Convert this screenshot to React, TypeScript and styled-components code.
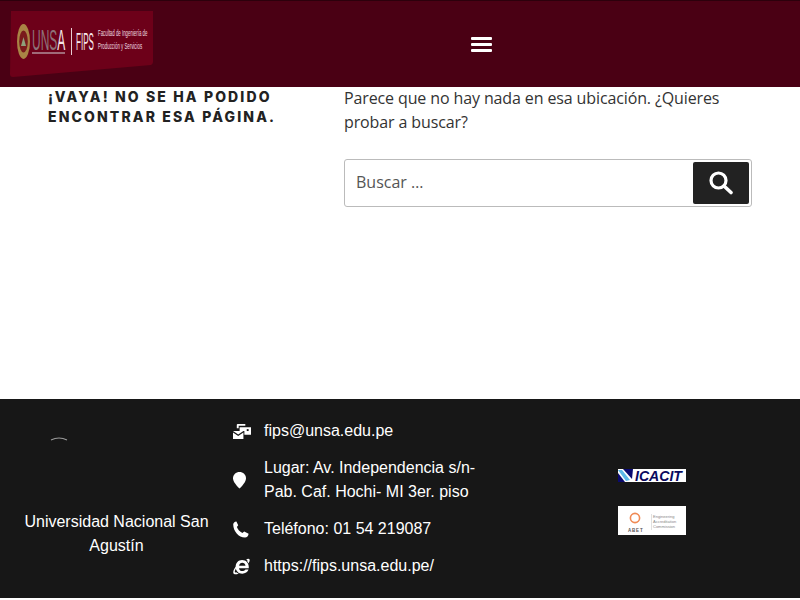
import React from "react";
import styled, { createGlobalStyle } from "styled-components";

const Global = createGlobalStyle`
  html, body { margin: 0; padding: 0; background: #fff; overflow: hidden; }
  * { box-sizing: border-box; }
`;
const Page = styled.div`
  width: 800px; height: 600px; display: flex; flex-direction: column; background: #fff;
`;
const Header = styled.header`
  height: 87px; flex: none; background: #4a0014; border-top: 1px solid #2c000c;
  display: flex; align-items: center; gap: 315px; padding-left: 10px;
`;
const LogoBox = styled.div`
  display: flex; align-self: flex-start; margin-top: -1px;
`;
const Burger = styled.div`
  width: 21px; display: flex; flex-direction: column; gap: 3px;
`;
const BurgerBar = styled.span`
  display: block; height: 3px; border-radius: 1px; background: #fff;
`;
const Main = styled.main`
  flex: none; height: 312px; display: grid; grid-template-columns: 296px 408px; padding: 0 48px;
`;
const Title = styled.h1`
  margin: 0; font: 800 14px/20px "Inter", "Liberation Sans", sans-serif;
  letter-spacing: 2.13px; color: #222; text-transform: uppercase;
`;
const Content = styled.div`
  display: flex; flex-direction: column; margin-top: -1px;
`;
const Lead = styled.p`
  margin: 0 0 25px; font: 400 16px/24px "Open Sans", "Liberation Sans", sans-serif; letter-spacing: -0.12px; color: #333;
`;
const SearchForm = styled.form`
  display: flex; align-items: center; justify-content: space-between; height: 48px; width: 408px;
  border: 1px solid #bbb; border-radius: 3px; padding: 0 2px 0 11px;
`;
const SearchPlaceholder = styled.span`
  font: 400 16px/24px "Open Sans", "Liberation Sans", sans-serif; color: #555; margin-top: -2px;
`;
const SearchButton = styled.div`
  width: 56px; height: 42px; background: #222; border-radius: 2px; display: flex; align-items: center; justify-content: center;
`;
const Footer = styled.footer`
  flex: none; height: 199px; background: #171717; display: grid; grid-template-columns: 233px 385px 182px;
  font: 400 16px/24px "Liberation Sans", Arial, sans-serif; color: #fff;
`;
const Uni = styled.div`
  display: flex; flex-direction: column; align-items: center; padding-top: 37px;
`;
const Arc = styled.div`
  display: flex; height: 74px; align-self: flex-start; margin-left: 50px;
`;
const UniName = styled.div`
  text-align: center; width: 200px;
`;
const Contacts = styled.ul`
  list-style: none; margin: 0; padding: 20px 0 0; display: flex; flex-direction: column; gap: 13px;
`;
const Contact = styled.li`
  display: flex; align-items: center; gap: 14px;
`;
const IconSlot = styled.span`
  flex: none; width: 17px; display: flex; justify-content: flex-start;
`;
const ContactText = styled.span`
  width: 225px; color: #fff;
`;
const Logos = styled.div`
  display: flex; flex-direction: column; gap: 24px; padding-top: 70px;
`;
const LogoImage = styled.div`
  display: flex; width: 68px;
`;

const FipsLogo = () => (
  <svg width="146" height="78" viewBox="0 0 146 78">
    <path d="M1 11 L143 11 L143 62 Q143 64 141 65 L3 77 Q0 77 0 74 Z" fill="#6d0019" />
    <ellipse cx="13.5" cy="41.5" rx="6.5" ry="17.5" fill="#a98445" />
    <ellipse cx="13.5" cy="41.5" rx="4.3" ry="11" fill="#7a1a1c" />
    <path d="M11 46 L13.5 37 L16 46 Z" fill="#8fa07a" />
    <text transform="translate(22 50) scale(0.4 1)" fontFamily="Liberation Sans" fontSize="30">
      <tspan fill="#8d7278">UNS</tspan><tspan fill="#f4e6e8">A</tspan>
    </text>
    <rect x="22" y="52" width="33" height="2" fill="#a06a78" />
    <rect x="61" y="28" width="1" height="27" fill="#e8cdd3" />
    <text transform="translate(66 50) scale(0.35 1)" fill="#f7e8eb" fontFamily="Liberation Sans" fontSize="23">FIPS</text>
    <text transform="translate(88 36) scale(0.46 1)" fill="#f0dde1" fontFamily="Liberation Sans" fontSize="9.5">Facultad de Ingeniería de</text>
    <text transform="translate(88 49) scale(0.46 1)" fill="#f0dde1" fontFamily="Liberation Sans" fontSize="9.5">Producción y Servicios</text>
  </svg>
);

const IcacitLogo = () => (
  <svg width="68" height="13" viewBox="0 0 68 13" overflow="visible">
    <rect width="68" height="13" fill="#fff" />
    <path d="M5 0 H15 L14 10 Z" fill="#0a0a6e" />
    <path d="M0 1 H4 L12 11 L8 12 Z" fill="#5cb8e8" />
    <path d="M0 4 L7 13 H0 Z" fill="#0a0a6e" />
    <text transform="translate(17 12) scale(0.88 0.95)" fill="#0a0a5e" fontFamily="Liberation Sans" fontSize="16" fontWeight="700" fontStyle="italic">ICACIT</text>
  </svg>
);

const AbetLogo = () => (
  <svg width="68" height="29" viewBox="0 0 68 29">
    <rect width="68" height="29" fill="#fff" />
    <circle cx="17" cy="12" r="4.6" fill="none" stroke="#f08a55" strokeWidth="1.6" />
    <text x="10" y="26" fill="#555" fontFamily="Liberation Sans" fontSize="4.5" fontWeight="700" letterSpacing="0.8">ABET</text>
    <rect x="33" y="8" width="0.6" height="16" fill="#ccc" />
    <text x="35" y="12" fill="#888" fontFamily="Liberation Sans" fontSize="4">Engineering</text>
    <text x="35" y="17" fill="#888" fontFamily="Liberation Sans" fontSize="4">Accreditation</text>
    <text x="35" y="22" fill="#888" fontFamily="Liberation Sans" fontSize="4">Commission</text>
  </svg>
);

const MailIcon = () => (
  <svg width="18" height="17" viewBox="0 0 19 17" fill="#fff" style={{ flex: "none" }}>
    <path d="M4 1.5 Q4 0.5 5 0.5 H13 V2.5 H6 V5 H4 Z" />
    <path d="M7 4 H19 V12 H12 V8 H7 Z" />
    <rect x="14.5" y="6" width="2" height="2" fill="#171717" />
    <path d="M0 8 H11 L5.5 11.6 Z" />
    <path d="M0 9.6 L5.5 13.2 L11 9.6 V16.5 H0 Z" />
  </svg>
);
const PinIcon = () => (
  <svg width="13" height="17" viewBox="0 0 13 17" fill="#fff">
    <path d="M6.5 0 C10 0 13 2.6 13 6.2 C13 10 8.5 14.5 6.5 16.5 C4.5 14.5 0 10 0 6.2 C0 2.6 3 0 6.5 0 Z" />
  </svg>
);
const PhoneIcon = () => (
  <svg width="16" height="17" viewBox="0 0 16 17" fill="#fff">
    <path d="M3.4 0.4 L5.2 4.2 L3.9 6 C4.8 8.6 6.6 10.6 9.4 11.9 L11.2 10.5 L15.6 12.8 C15.4 14.8 14 16.6 12 16.6 C5.5 16.2 0.4 10.2 0.2 3.4 C0.2 2 1.6 0.6 3.4 0.4 Z" />
  </svg>
);
const IeIcon = () => (
  <svg width="17" height="17" viewBox="0 0 17 17" fill="#fff">
    <path transform="translate(-1.6 -1.2) scale(1.12 1.08)" fillRule="evenodd" d="M9.5 3 C13 3 15.5 5.6 15.5 9.5 V10.5 H6.8 C7 12.3 8.2 13.2 9.8 13.2 C11.1 13.2 12 12.7 12.5 11.8 H15.3 C14.5 14.2 12.4 15.6 9.7 15.6 C6.3 15.6 3.8 13.1 3.8 9.4 C3.8 5.6 6.2 3 9.5 3 Z M6.9 8.3 H12.6 C12.4 6.6 11.2 5.5 9.7 5.5 C8.2 5.5 7.1 6.6 6.9 8.3 Z" />
    <path d="M13 1.6 C14.6 0.6 16.2 0.6 16.6 1.6 C17 2.6 16.4 4 15.4 5.4 C15.2 4.4 14.6 3.6 14 3 C14.6 2.4 14.6 2 14.2 1.9 Z" />
    <path d="M3.5 8 C1 10.5 -0.2 13.5 0.4 15.3 C1 16.8 3.4 16.6 5.8 15.4 C4.8 15.1 3.8 14.7 3.3 14.2 C2.4 14.6 1.8 14.5 1.8 13.8 C1.8 12.8 2.5 11.3 3.3 10 Z" />
  </svg>
);
const SearchIcon = () => (
  <svg width="24" height="24" viewBox="0 0 24 24" fill="none" stroke="#fff">
    <circle cx="9.5" cy="9.5" r="7.5" strokeWidth="3.2" />
    <path d="M15 15 L22 21.5" strokeWidth="3.6" strokeLinecap="round" />
  </svg>
);

const App: React.FC = () => (
  <Page>
    <Global />
    <Header>
      <LogoBox><FipsLogo /></LogoBox>
      <Burger><BurgerBar /><BurgerBar /><BurgerBar /></Burger>
    </Header>
    <Main>
      <Title>¡Vaya! No se ha podido encontrar esa página.</Title>
      <Content>
        <Lead>Parece que no hay nada en esa ubicación. ¿Quieres probar a buscar?</Lead>
        <SearchForm>
          <SearchPlaceholder>Buscar …</SearchPlaceholder>
          <SearchButton><SearchIcon /></SearchButton>
        </SearchForm>
      </Content>
    </Main>
    <Footer>
      <Uni>
        <Arc>
          <svg width="18" height="6" viewBox="0 0 18 6"><path d="M1 4 Q9 0 17 4" fill="none" stroke="#9a9a9a" strokeWidth="1.2" /></svg>
        </Arc>
        <UniName>Universidad Nacional San Agustín</UniName>
      </Uni>
      <Contacts>
        <Contact><IconSlot><MailIcon /></IconSlot><ContactText>fips@unsa.edu.pe</ContactText></Contact>
        <Contact><IconSlot><PinIcon /></IconSlot><ContactText>Lugar: Av. Independencia s/n-Pab. Caf. Hochi- MI 3er. piso</ContactText></Contact>
        <Contact><IconSlot><PhoneIcon /></IconSlot><ContactText>Teléfono: 01 54 219087</ContactText></Contact>
        <Contact><IconSlot><IeIcon /></IconSlot><ContactText>https://fips.unsa.edu.pe/</ContactText></Contact>
      </Contacts>
      <Logos>
        <LogoImage><IcacitLogo /></LogoImage>
        <LogoImage><AbetLogo /></LogoImage>
      </Logos>
    </Footer>
  </Page>
);

export default App;
